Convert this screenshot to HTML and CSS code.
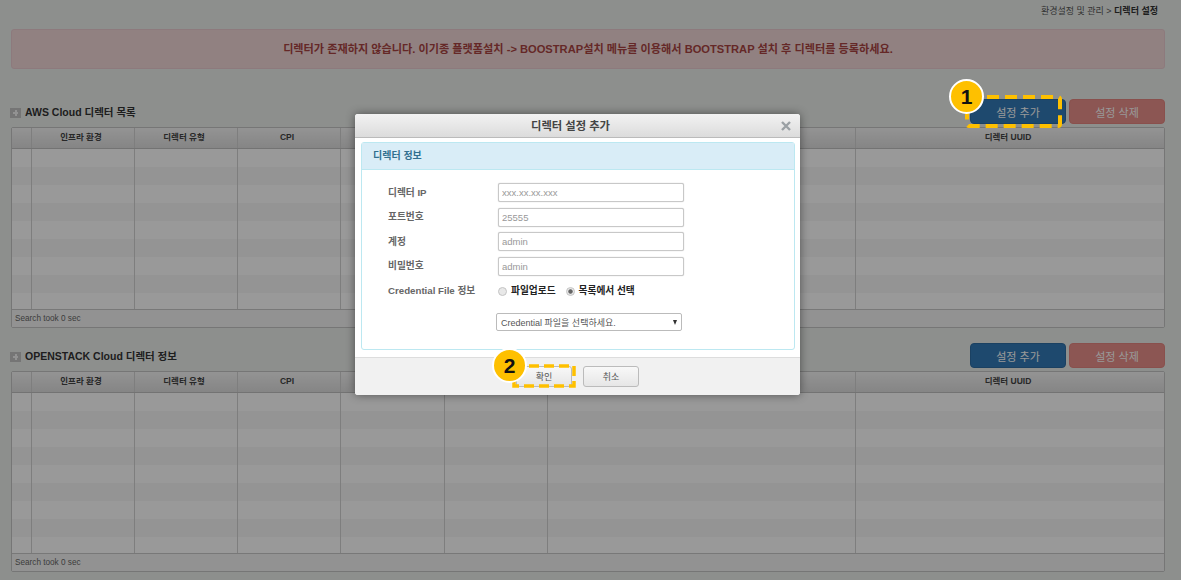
FILE: index.html
```html
<!DOCTYPE html>
<html>
  <head>
    <title>디렉터 설정</title>
    <link rel="stylesheet" href="styles.css">
  </head>
  <body>
    <div class="page">
      <div class="breadcrumb">환경설정 및 관리 &gt; <b>디렉터 설정</b></div>
      <div class="alert">디렉터가 존재하지 않습니다. 이기종 플랫폼설치 -&gt; BOOSTRAP설치 메뉴를 이용해서 BOOTSTRAP 설치 후 디렉터를 등록하세요.</div>

      <div class="section first">
        <div class="section-head">
          <h2 class="title"><span class="bullet"></span>AWS Cloud 디렉터 목록</h2>
          <div class="actions">
            <button class="btn btn-add">설정 추가</button>
            <button class="btn btn-del">설정 삭제</button>
          </div>
        </div>
        <div class="grid">
          <div class="grid-head">
            <div></div><div>인프라 환경</div><div>디렉터 유형</div><div>CPI</div><div></div><div></div><div></div><div>디렉터 UUID</div>
          </div>
          <div class="grid-body">
            <div class="grid-stripes"></div>
            <div class="grid-lines"><div></div><div></div><div></div><div></div><div></div><div></div><div></div><div></div></div>
          </div>
          <div class="grid-foot">Search took 0 sec</div>
        </div>
      </div>

      <div class="section second">
        <div class="section-head">
          <h2 class="title"><span class="bullet"></span>OPENSTACK Cloud 디렉터 정보</h2>
          <div class="actions">
            <button class="btn btn-add">설정 추가</button>
            <button class="btn btn-del">설정 삭제</button>
          </div>
        </div>
        <div class="grid">
          <div class="grid-head">
            <div></div><div>인프라 환경</div><div>디렉터 유형</div><div>CPI</div><div></div><div></div><div></div><div>디렉터 UUID</div>
          </div>
          <div class="grid-body">
            <div class="grid-stripes"></div>
            <div class="grid-lines"><div></div><div></div><div></div><div></div><div></div><div></div><div></div><div></div></div>
          </div>
          <div class="grid-foot">Search took 0 sec</div>
        </div>
      </div>
    </div>

    <div class="overlay"></div>

    <div class="modal">
      <div class="modal-head">
        <span>디렉터 설정 추가</span>
        <svg class="modal-close" width="10" height="10" viewBox="0 0 10 10">
          <path d="M1 1L9 9M9 1L1 9" stroke="#9aa0a4" stroke-width="2.4" fill="none"/>
        </svg>
      </div>
      <div class="modal-body">
        <div class="panel">
          <div class="panel-head">디렉터 정보</div>
          <div class="panel-body">
            <div class="form-row"><label>디렉터 IP</label><input class="field" placeholder="xxx.xx.xx.xxx"></div>
            <div class="form-row"><label>포트번호</label><input class="field" placeholder="25555"></div>
            <div class="form-row"><label>계정</label><input class="field" placeholder="admin"></div>
            <div class="form-row"><label>비밀번호</label><input class="field" placeholder="admin"></div>
            <div class="form-row radio-row">
              <label>Credential File 정보</label>
              <div class="radios">
                <span class="radio"></span><b>파일업로드</b>
                <span class="radio checked"></span><b>목록에서 선택</b>
              </div>
            </div>
            <div class="select-box">
              <span>Credential 파일을 선택하세요.</span>
              <span class="caret"></span>
            </div>
          </div>
        </div>
      </div>
      <div class="modal-foot">
        <button class="btn-plain">확인</button>
        <button class="btn-plain">취소</button>
      </div>
    </div>

    <svg class="mark mark-one" width="97" height="33" viewBox="0 0 97 33">
      <rect x="2" y="2" width="93" height="29" rx="2" fill="none" stroke="#fec000" stroke-width="4" stroke-dasharray="12 6"/>
    </svg>
    <div class="badge badge-one">1</div>
    <svg class="mark mark-two" width="64" height="24" viewBox="0 0 64 24">
      <rect x="2" y="2" width="60" height="20" fill="none" stroke="#fec000" stroke-width="3.5" stroke-dasharray="10 5"/>
    </svg>
    <div class="badge badge-two">2</div>
  </body>
</html>
```

FILE: styles.css
```css
* {
  box-sizing: border-box;
}
html, body {
  height: 100%;
}
body {
  margin: 0;
  overflow: hidden;
  background: #ebefec;
  font-family: "Liberation Sans", "Noto Sans CJK KR", sans-serif;
  font-size: 12px;
  color: #333;
}
.page {
  padding: 0 16px 0 11px;
}
.breadcrumb {
  height: 29px;
  padding: 4px 7px 0 0;
  text-align: right;
  font-size: 9px;
  line-height: 15px;
  color: #555;
}
.breadcrumb b {
  color: #333;
}
.alert {
  height: 40px;
  line-height: 38px;
  text-align: center;
  font-size: 11.15px;
  font-weight: bold;
  color: #a94442;
  background: #f2d8d8;
  border: 1px solid #ebccd1;
  border-radius: 3px;
}
.section.first {
  margin-top: 30px;
}
.section.second {
  margin-top: 15px;
}
.section-head {
  height: 28px;
  display: flex;
  justify-content: space-between;
}
.title {
  margin: 5px 0 0 -1px;
  height: 16px;
  font-size: 10.5px;
  line-height: 16px;
  font-weight: bold;
  color: #333;
  display: flex;
  align-items: center;
}
.bullet {
  width: 11px;
  height: 10px;
  margin-right: 4px;
  background: #c4c4c4;
  position: relative;
  top: 1px;
}
.bullet::before,
.bullet::after {
  content: "";
  position: absolute;
  background: #f4f4f4;
}
.bullet::before {
  left: 3px;
  right: 3px;
  top: 4px;
  height: 2px;
}
.bullet::after {
  left: 4.5px;
  width: 2px;
  top: 2px;
  bottom: 2px;
}
.actions {
  display: flex;
  gap: 3px;
  height: 25px;
}
.btn {
  width: 96px;
  height: 25px;
  padding: 0;
  font-family: inherit;
  font-size: 11px;
  color: #fff;
  border-radius: 4px;
  border: 1px solid transparent;
}
.btn-add {
  background: #337ab7;
  border-color: #2e6da4;
}
.btn-del {
  background: #e98f8a;
  border-color: #e58680;
  color: #fff;
}
.grid {
  height: 201px;
  display: flex;
  flex-direction: column;
  border: 1px solid #c5c5c5;
  border-radius: 2px;
}
.grid-head,
.grid-lines {
  display: grid;
  grid-template-columns: 20px 103px 103px 103px 104px 103px 308px 1fr;
}
.grid-head {
  height: 21px;
  border-bottom: 1px solid #c0c0c0;
  background: linear-gradient(#f6f6f6, #dedede);
  font-size: 8.5px;
  line-height: 18px;
  font-weight: bold;
  text-align: center;
  color: #444;
}
.grid-head > div,
.grid-lines > div {
  border-right: 1px solid #d2d2d2;
  padding-right: 4px;
}
.grid-head > div:last-child,
.grid-lines > div:last-child {
  border-right: 0;
}
.grid-body {
  flex: 1;
  position: relative;
}
.grid-stripes {
  height: 100%;
  background: repeating-linear-gradient(#fff 0, #fff 18px, #f7f7f7 18px, #f7f7f7 36px);
}
.grid-lines {
  position: absolute;
  inset: 0;
}
.grid-foot {
  height: 18px;
  padding-left: 3px;
  line-height: 17px;
  font-size: 8.2px;
  color: #666;
  border-top: 1px solid #c8c8c8;
  background: #f4f4f4;
}
.overlay {
  position: absolute;
  inset: 0;
  background: rgba(0, 0, 0, 0.4);
}
.modal {
  position: absolute;
  left: 355px;
  top: 114px;
  width: 445px;
  height: 281px;
  display: flex;
  flex-direction: column;
  background: #fff;
  border-radius: 3px;
  box-shadow: 0 0 10px rgba(0, 0, 0, 0.45);
}
.modal-head {
  height: 24px;
  padding-right: 14px;
  position: relative;
  text-align: center;
  font-size: 11.3px;
  line-height: 24px;
  font-weight: bold;
  color: #444;
  background: linear-gradient(#f2f2f2, #dcdcdc);
  border-bottom: 1px solid #bbb;
  border-radius: 3px 3px 0 0;
}
.modal-close {
  position: absolute;
  right: 9px;
  top: 7px;
}
.modal-body {
  flex: 1;
  padding: 4px 5px 0 6px;
}
.panel {
  height: 208px;
  border: 1px solid #bce8f1;
  border-radius: 3px;
}
.panel-head {
  height: 27px;
  padding-left: 11px;
  font-size: 10px;
  line-height: 26px;
  font-weight: bold;
  color: #31708f;
  background: #d9edf7;
  border-bottom: 1px solid #bce8f1;
}
.panel-body {
  padding-top: 13px;
}
.form-row {
  display: flex;
  align-items: center;
  height: 19px;
  margin-bottom: 5.5px;
  padding-left: 26px;
}
.form-row label {
  width: 110px;
  margin-top: -2px;
  font-size: 9.7px;
  font-weight: bold;
  color: #666;
}
.field {
  width: 186px;
  height: 19px;
  padding: 0 3px;
  font-family: inherit;
  font-size: 9.5px;
  border: 1px solid #c8c8c8;
  border-radius: 2px;
  outline: none;
  box-shadow: 0 0 1px #bbb;
}
.field::placeholder {
  color: #999;
}
.radio-row {
  margin-top: 2px;
}
.radios {
  display: flex;
  align-items: center;
  font-size: 9.7px;
  color: #222;
}
.radios b {
  margin-right: 10px;
  margin-top: -1px;
}
.radio {
  width: 9px;
  height: 9px;
  margin: 2px 4px 0 0;
  border-radius: 50%;
  border: 1px solid #c4c4c4;
  background: #e8e8e8;
}
.radio.checked {
  background: radial-gradient(circle, #666 0, #666 1.8px, #e8e8e8 2.6px);
}
.select-box {
  width: 186px;
  height: 18px;
  margin: 13px 0 0 134px;
  padding: 0 4px;
  display: flex;
  align-items: center;
  justify-content: space-between;
  font-size: 9px;
  color: #555;
  background: #fff;
  border: 1px solid #bbb;
  border-radius: 2px;
}
.caret {
  border-left: 2.5px solid transparent;
  border-right: 2.5px solid transparent;
  border-top: 5px solid #333;
}
.modal-foot {
  height: 38px;
  display: flex;
  justify-content: center;
  align-items: center;
  gap: 11px;
  background: #f1f1f1;
  border-top: 1px solid #ddd;
  border-radius: 0 0 3px 3px;
}
.btn-plain {
  width: 56px;
  height: 21px;
  padding: 0;
  font-family: inherit;
  font-size: 9px;
  color: #555;
  background: linear-gradient(#f8f8f8, #e6e6e6);
  border: 1px solid #bbb;
  border-radius: 3px;
}
.mark {
  position: absolute;
}
.mark-one {
  left: 965px;
  top: 95px;
}
.mark-two {
  left: 512px;
  top: 364px;
}
.badge {
  position: absolute;
  width: 35px;
  height: 35px;
  border-radius: 50%;
  border: 2px solid #fff;
  background: #fec000;
  color: #111;
  font-size: 21px;
  font-weight: bold;
  line-height: 31px;
  text-align: center;
}
.badge-one {
  left: 949px;
  top: 79px;
}
.badge-two {
  left: 492px;
  top: 348px;
}
```
